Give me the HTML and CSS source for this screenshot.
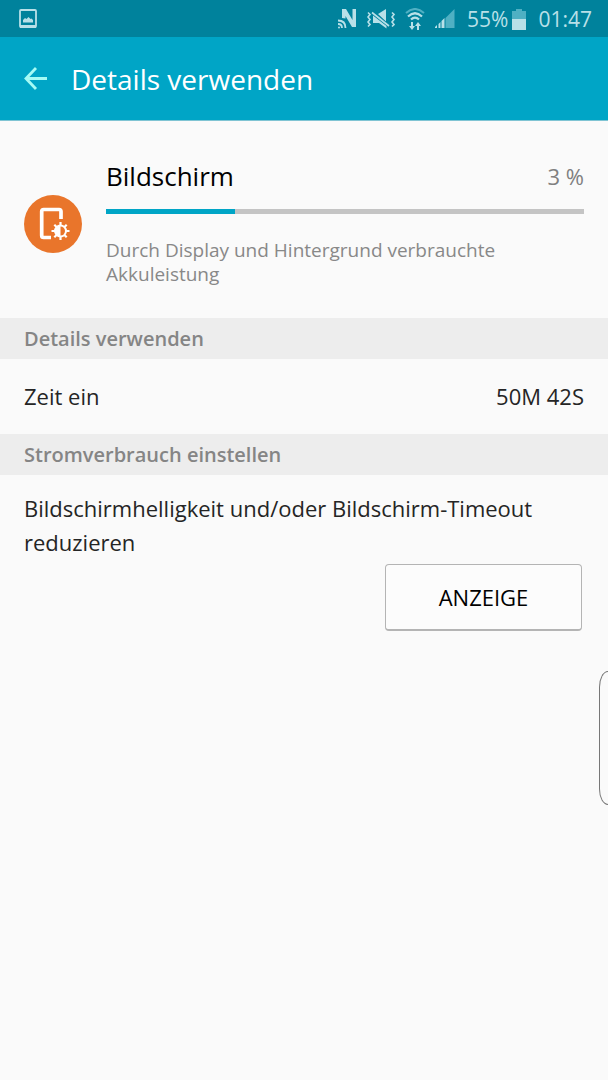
FILE: index.html
```html
<!DOCTYPE html>
<html lang="de">

<head>
  <meta charset="UTF-8">
  <meta name="viewport" content="width=device-width, initial-scale=1.0">
  <title>Details verwenden</title>
  <link rel="stylesheet" href="styles.css">
</head>

<body>
  <div class="status-bar">
    <svg width="18" height="20" viewBox="0 0 18 20">
      <rect x="1" y="1" width="16" height="17" rx="1" fill="none" stroke="currentColor" stroke-width="1.8" />
      <path d="M1 16h16v3H1zM4 13.500V11l2-2 1.500 1 2-2 2 2 1-.5 1.500 1.500v2.500z" fill="currentColor" />
    </svg>
    <div class="status-icons">
      <div class="signals">
        <!-- NFC -->
        <svg width="19" height="20" viewBox="0 0 19 20">
          <path d="M4 9V0h4l6.500 11V0H18v18h-4L7.500 7v2.500Q6 9 4 9z" fill="currentColor" />
          <path d="M0 11.500q7.500 0 7.500 7.500M0 15q4 0 4 4" fill="none" stroke="currentColor" stroke-width="1.8" />
          <circle cx="1" cy="18.500" r="1" fill="currentColor" />
        </svg>
        <!-- Vibration -->
        <svg width="28" height="20" viewBox="0 0 28 20">
          <path d="M11 5l8-5v12.500zM6 6.500L19.500 17v2.500L12 14H6z" fill="currentColor" />
          <path d="M5 3.500L22 17" stroke="currentColor" stroke-width="1.6" />
          <path d="M1 3.500l2 2-2 2.500 2 2.500-2 2.500 2 2.500-2 2M25 3.500l2 2-2 2.500 2 2.500-2 2.500 2 2.500-2 2" fill="none" stroke="currentColor" stroke-width="1.600" />
        </svg>
        <!-- WLAN -->
        <svg width="20" height="22" viewBox="0 0 20 22">
          <path d="M1 5q9-8 18 0" fill="none" stroke="#4fb0c3" stroke-width="2" />
          <path d="M3 8.500q7-6.500 14 0M6 11.500q4-4 8 0" fill="none" stroke="currentColor" stroke-width="2.200" />
          <path d="M6 14h2v4h2l-3 4-3-4h2zM12 22h2v-4h2l-3-4-3 4h2z" fill="currentColor" />
        </svg>
        <!-- Mobilfunk -->
        <svg width="20" height="20" viewBox="0 0 20 20">
          <path d="M10.500 9L19.500 0v19h-9z" fill="#4fb0c3" />
          <path d="M0 19v-1l2-2v3zM3.500 19v-4l2-2v6zM6.500 19v-7l3-3v10z" fill="currentColor" />
        </svg>
      </div>
      <div class="battery">
        <span>55%</span>
        <svg width="14" height="21" viewBox="0 0 14 21">
          <path d="M0 10V2h4V0h6v2h4v8z" fill="#4fb0c3" />
          <path d="M0 10h14v11H0z" fill="currentColor" />
        </svg>
      </div>
      <span>01:47</span>
    </div>
  </div>

  <header class="app-bar">
    <button class="back" type="button" aria-label="Zurück">
      <svg width="23" height="23" viewBox="0 0 23 23">
        <path d="M12 1L2 11.5 12 22M2 11.5h21" fill="none" stroke="currentColor" stroke-width="2.8" />
      </svg>
    </button>
    <h1>Details verwenden</h1>
  </header>

  <main>
    <section class="usage">
      <svg class="usage-icon" width="58" height="58" viewBox="0 0 58 58">
        <circle cx="29" cy="29" r="29" fill="#e9752b" />
        <path d="M37 24v-7.500a2 2 0 0 0-2-2H19.700a2 2 0 0 0-2 2v24a2 2 0 0 0 2 2H27" fill="none" stroke="#fff" stroke-width="3.700" />
        <g transform="translate(36.500 36)">
          <circle r="9" fill="#e9752b" />
          <path d="M0-9V9M-9 0H9M-6.200-6.200L6.200 6.200M-6.200 6.200L6.200-6.200" stroke="#fff" stroke-width="2.200" />
          <circle r="6.500" fill="#fff" />
          <path d="M0-4.500a4.500 4.500 0 0 1 0 9z" fill="#e9752b" />
        </g>
      </svg>
      <div class="usage-info">
        <div class="usage-head">
          <h2 id="usage-name">Bildschirm</h2>
          <span>3 %</span>
        </div>
        <progress value="27" max="100" aria-labelledby="usage-name"></progress>
        <p>Durch Display und Hintergrund verbrauchte Akkuleistung</p>
      </div>
    </section>

    <h3 class="section-title">Details verwenden</h3>
    <div class="row">
      <span>Zeit ein</span>
      <span>50M 42S</span>
    </div>

    <h3 class="section-title">Stromverbrauch einstellen</h3>
    <div class="adjust">
      <p>Bildschirmhelligkeit und/oder Bildschirm-Timeout reduzieren</p>
      <button class="action" type="button">ANZEIGE</button>
    </div>
  </main>

  <div class="edge-handle"></div>
</body>

</html>
```
FILE: styles.css
```css
* {
  box-sizing: border-box;
}

body {
  margin: 0;
  min-height: 100vh;
  position: relative;
  overflow-x: hidden;
  background: #fafafa;
  color: #252525;
  font-family: "Open Sans", sans-serif;
  font-size: 22px;
}

h1, h2, h3, p {
  margin: 0;
  font-weight: normal;
}

svg {
  display: block;
  flex: none;
}

button {
  font-family: inherit;
  cursor: pointer;
}

.status-bar {
  display: flex;
  justify-content: space-between;
  align-items: center;
  height: 37px;
  padding: 1px 16px 0 19px;
  background: #00829c;
  color: #b8e0e8;
  font-size: 21px;
}

.status-icons {
  display: flex;
  align-items: center;
  gap: 12px;
}

.signals {
  display: flex;
  align-items: center;
  gap: 10px;
}

.battery {
  display: flex;
  align-items: center;
  gap: 4px;
}

.app-bar {
  display: flex;
  align-items: center;
  gap: 24px;
  height: 84px;
  padding: 0 24px;
  background: #00a5c6;
  border-bottom: 1px solid #7fc4d3;
  color: #fff;
}

.app-bar h1 {
  font-size: 28px;
}

.back {
  padding: 0;
  border: 0;
  background: none;
  color: #a5fbf5;
}

.usage {
  display: flex;
  align-items: flex-start;
  gap: 24px;
  padding: 37px 24px 32px;
}

.usage-icon {
  margin-top: 37px;
}

.usage-info {
  flex: 1;
}

.usage-head {
  display: flex;
  justify-content: space-between;
  align-items: center;
  line-height: 36px;
  color: #808080;
}

.usage-head h2 {
  font-size: 26px;
  color: #000;
}

progress {
  display: block;
  width: 100%;
  height: 5px;
  margin: 15px 0 24px;
  border: 0;
  appearance: none;
  background: #c4c4c4;
}

progress::-webkit-progress-bar {
  background: #c4c4c4;
}

progress::-webkit-progress-value {
  background: #00a5c6;
}

.usage p {
  font-size: 19px;
  line-height: 24px;
  color: #888;
}

.section-title {
  padding: 0 24px;
  background: #ededed;
  color: #858585;
  font-size: 20px;
  font-weight: 600;
  line-height: 41px;
}

.row {
  display: flex;
  justify-content: space-between;
  padding: 0 24px;
  line-height: 75px;
}

.adjust {
  padding: 16px 26px 16px 24px;
}

.adjust p {
  line-height: 34px;
}

.action {
  display: block;
  width: 197px;
  height: 67px;
  margin: 5px 0 0 auto;
  border: 1px solid #b4b4b4;
  border-bottom-width: 2px;
  border-radius: 4px;
  background: #fcfcfc;
  color: #000;
  font-size: 22px;
}

/* Edge panel handle, sits over the content */
.edge-handle {
  position: absolute;
  top: 671px;
  right: 0;
  width: 9px;
  height: 134px;
  border: 1px solid #777;
  border-right: 0;
  border-radius: 9px 0 0 9px / 16px 0 0 16px;
  background: #fafafa;
}
```
